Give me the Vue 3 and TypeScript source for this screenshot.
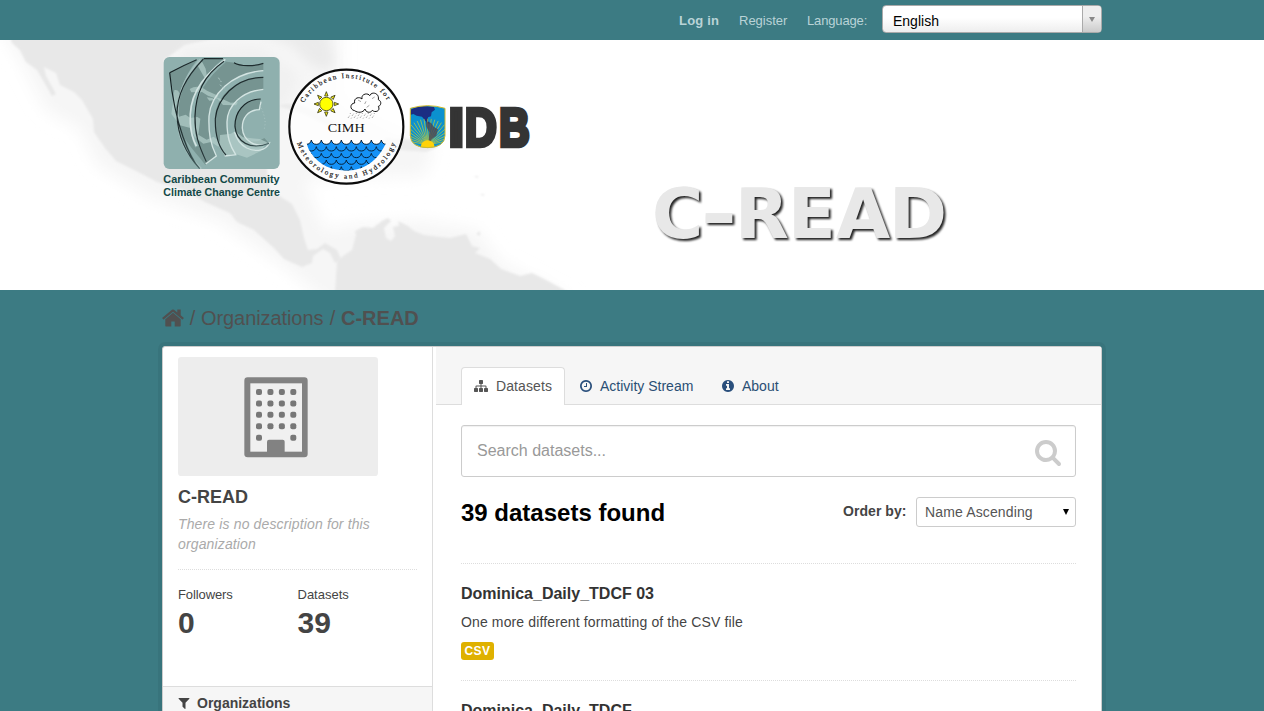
<script setup lang="ts">
const icons = {
  home: 'M1472 992v480q0 26-19 45t-45 19h-384v-384h-256v384h-384q-26 0-45-19t-19-45v-480q0-1 .5-3t.5-3l575-474 575 474q1 2 1 6zm223-69l-62 74q-8 9-21 11h-3q-13 0-21-7l-692-577-692 577q-12 8-24 7-13-2-21-11l-62-74q-8-10-7-23.5t11-21.5l719-599q32-26 76-26t76 26l244 204v-195q0-14 9-23t23-9h192q14 0 23 9t9 23v408l219 182q10 8 11 21.5t-7 23.5z',
  search: 'M1216 832q0-185-131.5-316.5t-316.5-131.5-316.5 131.5-131.5 316.5 131.5 316.5 316.5 131.5 316.5-131.5 131.5-316.5zm512 832q0 52-38 90t-90 38q-54 0-90-38l-343-342q-179 124-399 124-143 0-273.5-55.5t-225-150-150-225-55.5-273.5 55.5-273.5 150-225 225-150 273.5-55.5 273.5 55.5 225 150 150 225 55.5 273.5q0 220-124 399l343 343q37 37 37 90z',
  info: 'M1152 1376v-160q0-14-9-23t-23-9h-96v-512q0-14-9-23t-23-9h-320q-14 0-23 9t-9 23v160q0 14 9 23t23 9h96v320h-96q-14 0-23 9t-9 23v160q0 14 9 23t23 9h448q14 0 23-9t9-23zm-128-896v-160q0-14-9-23t-23-9h-192q-14 0-23 9t-9 23v160q0 14 9 23t23 9h192q14 0 23-9t9-23zm640 416q0 209-103 385.5t-279.5 279.5-385.5 103-385.5-103-279.5-279.5-103-385.5 103-385.5 279.5-279.5 385.5-103 385.5 103 279.5 279.5 103 385.5z',
  clock: 'M1024 544v448q0 14-9 23t-23 9h-320q-14 0-23-9t-9-23v-64q0-14 9-23t23-9h224v-352q0-14 9-23t23-9h64q14 0 23 9t9 23zm416 352q0-148-73-273t-198-198-273-73-273 73-198 198-73 273 73 273 198 198 273 73 273-73 198-198 73-273zm224 0q0 209-103 385.5t-279.5 279.5-385.5 103-385.5-103-279.5-279.5-103-385.5 103-385.5 279.5-279.5 385.5-103 385.5 103 279.5 279.5 103 385.5z',
  filter: 'M1595 295q17 41-14 70l-493 493v742q0 42-39 59-13 5-25 5-27 0-45-19l-256-256q-19-19-19-45v-486l-493-493q-31-29-14-70 17-39 59-39h1280q42 0 59 39z',
  sitemap: 'M1792 1248v320q0 40-28 68t-68 28h-320q-40 0-68-28t-28-68v-320q0-40 28-68t68-28h96v-192h-512v192h96q40 0 68 28t28 68v320q0 40-28 68t-68 28h-320q-40 0-68-28t-28-68v-320q0-40 28-68t68-28h96v-192h-512v192h96q40 0 68 28t28 68v320q0 40-28 68t-68 28h-320q-40 0-68-28t-28-68v-320q0-40 28-68t68-28h96v-192q0-52 38-90t90-38h512v-192h-96q-40 0-68-28t-28-68v-320q0-40 28-68t68-28h320q40 0 68 28t28 68v320q0 40-28 68t-68 28h-96v192h512q52 0 90 38t38 90v192h96q40 0 68 28t28 68z',
}

const tabs = [
  { label: 'Datasets', icon: icons.sitemap, active: true, cls: 'tab-datasets' },
  { label: 'Activity Stream', icon: icons.clock, active: false, cls: 'tab-activity' },
  { label: 'About', icon: icons.info, active: false, cls: 'tab-about' },
]

const datasets = [
  { title: 'Dominica_Daily_TDCF 03', notes: 'One more different formatting of the CSV file', format: 'CSV' },
  { title: 'Dominica_Daily_TDCF', notes: '', format: 'CSV' },
]

// Rows of scalloped waves for the institute seal
const waveRow = (x: number, y: number): string => `M${x} ${y}` + 'q3 13 15 13q12 0 15-13'.repeat(10)
const waves: string[] = [0, 1, 2, 3, 4].map((row) => waveRow(row % 2 ? 37 : 52, 228 + row * 20))
const sea = waveRow(52, 228) + 'V330H52Z'

const rays = Array.from({ length: 8 }, (_, i) => i * 45)
const beams = Array.from({ length: 21 }, (_, i) => -80 + i * 8)
const windows = [0, 1, 2, 3, 4].flatMap((r) =>
  [0, 1, 2, 3].filter((c) => r < 4 || c === 0 || c === 3).map((c) => ({ x: 303 + c * 34.3, y: 282 + r * 34.3 })),
)
const drops = Array.from({ length: 27 }, (_, i) => ({
  x: 200 + (i % 9) * 9 + Math.floor(i / 9) * -3,
  y: 147 + Math.floor(i / 9) * 6 + (i % 2) * 2,
}))
</script>

<template>
  <div class="page">
    <nav class="account">
      <div class="container account-inner">
        <a class="login">Log in</a>
        <a class="register">Register</a>
        <span class="lang-label">Language:</span>
        <div class="lang-select"><span>English</span><i><b></b></i></div>
      </div>
    </nav>

    <header class="banner">
      <svg class="map" width="1264" height="250" viewBox="0 0 1264 250">
        <defs>
          <filter id="haze" x="-20%" y="-20%" width="140%" height="140%"><feGaussianBlur stdDeviation="8" /></filter>
          <filter id="soft"><feGaussianBlur stdDeviation="1" /></filter>
          <filter id="gulf" x="-30%" y="-30%" width="160%" height="160%"><feGaussianBlur stdDeviation="6" /></filter>
        </defs>
        <path d="M-5-20L20 20 45 70 80 90 96 125 150 158 220 182 290 232 330 265 575 260 500 222 478 190 420 180 350 185 325 190 305 140 345 138 425 136 435 105 385 85 340 60 340-20Z" fill="#f6f6f6" filter="url(#haze)" />
        <g fill="#e8e8e8" filter="url(#soft)">
          <path d="M10-5L12 3 20 10 26 22 37 30 44 42 52 56 56 54 51 45 46 36 44 27 56 33 60 45 74 52 82 60 93 79 94 92 105 108 116 121 138 132 157 142 184 150 205 162 230 173 237 182 254 190 274 208 284 219 302 227 312 223 313 216 323 209 330 213 335 223 341 219 337 210 325 203 317 209 308 210 304 198 300 180 292 164 270 150 265 118 230 122 195 120 174 105 165 70 164 20 185 5 230-5Z" />
          <path d="M335 252L337 222 343 216 352 210 356 195 355 191 363 187 373 188 382 181 388 178 391 181 384 188 386 198 391 201 395 196 393 187 399 186 398 181 408 186 414 191 424 195 440 197 450 198 466 194 472 206 480 208 475 213 490 219 501 229 520 236 532 233 548 241 568 252Z" />
          <path d="M476 194l4-3 0 5zM474 136h4v2zM480 154h4v2z" />
        </g>
        <g filter="url(#gulf)">
          <path d="M255-10h72l8 34 -8 7 -16-6 -18-18z" fill="#ebebeb" />
          <path d="M175 35L184 8 260 6 300 35 290 60 210 120 180 95Z" fill="#f1f1f1" />
        </g>
        <path d="M278 66q15-6 34 4l28 15-12 1-24-12zM385 98l30 2 23 7-12 5-26-2-18 3z" fill="#ebebeb" filter="url(#soft)" />
      </svg>

      <div class="logos">
        <svg class="logo-cccc" width="130" height="155" viewBox="0 0 390 465">
          <defs>
            <linearGradient id="fade" x1="0" y1="0" x2="1" y2="1">
              <stop offset="0" stop-color="#111c1e" /><stop offset=".6" stop-color="#263638" /><stop offset="1" stop-color="#4c6a6a" />
            </linearGradient>
          </defs>
          <rect x="26" y="21" width="348" height="336" rx="17" fill="#8fb0ae" />
          <g fill="#769491">
            <path d="M44 67Q85 48 126 30C90 76 68 125 68 195 70 260 103 320 139 356 105 325 75 245 44 67Z" />
            <path d="M143 26H205C150 68 118 130 120 200 120 265 135 300 155 342L183 320 151 345C110 290 66 255 66 190 72 120 110 66 143 26Z" />
            <path d="M205 34L238 38C275 50 305 50 325 40V61C245 68 200 125 162 190 160 250 166 281 184 318L155 342C125 285 118 245 120 195 122 140 145 73 205 34Z" />
            <path d="M325 82V118C265 125 218 167 215 217 214 252 221 285 240 313L209 317C187 285 176 240 181 190 190 133 245 83 325 82Z" />
            <path d="M317 147C265 150 242 188 239 224 238 270 277 300 318 292L342 279 328 264C290 290 262 265 262 228 264 197 286 177 313 176Z" />
          </g>
          <path d="M208 32Q121 105 112 190 108 250 126 290" fill="none" stroke="#8fb0ae" stroke-width="12" />
          <path d="M325 72C235 76 176 135 171 200 170 250 178 285 195 317" fill="none" stroke="#8fb0ae" stroke-width="15" />
          <g fill="#b3cecb" opacity=".7">
            <path d="M129 29l13 8 10 19 4 24-7 4-12-21-10-18zM104 117q26-15 52 5l33 15-4 9-26-9-18-11-32 1zM155 142l17 2 8 6-17 2zM185 143l19 5 23 10 22-1-6 9-39-1zM58 120q18-2 14 20l-10 35 10 25 20-6 14 10 21-3 9 5-6 48 25 15 21-9 25 22-11 8-22-14-23 5-25-19-14-28-31-8-26-34 5-36zM195 255l33-4 12-8 24 19 50 5 22 10-18 26-42 20-37-12-30 7-15-25z" />
          </g>
          <g fill="none" stroke="#d3e4e2">
            <path d="M136 28C80 90 61 150 70 213 68 260 90 310 139 356" stroke="#a5c0be" stroke-width="5" />
            <path d="M211 28C127 90 101 150 106 220 108 252 117 275 124 288" stroke-width="5" />
            <path d="M325 62C228 69 168 135 162 198 160 250 166 281 184 318L152 342" stroke-width="4" />
            <path d="M325 118C260 124 217 167 216 216 216 262 225 287 242 314L209 318" stroke-width="4" />
            <path d="M318 155L313 179C278 180 261 205 262 235 264 270 300 298 343 279 332 303 302 307 275 294 255 283 244 266 239 246" stroke-width="4" />
          </g>
          <g fill="none" stroke="url(#fade)" stroke-width="3.5">
            <path d="M44 68Q85 46 125 29M44 68C60 230 105 325 134 356M145 27C90 85 66 135 66 195 68 255 92 310 134 356" />
            <path d="M146 26H204M207 34C145 78 122 130 120 200 119 250 130 285 154 335" />
            <path d="M237 38C255 50 300 49 325 40M325 82C238 83 187 147 181 206 180 250 190 290 213 315" />
            <path d="M317 147C265 148 239 190 240 230 244 275 285 302 342 280" />
          </g>
          <path d="M315 166l7 15 6 18 3 20-4 24" fill="none" stroke="#a9c4c2" stroke-width="3" stroke-dasharray="3 7" />
          <path d="M190 83l9 13M195 104l17 17" stroke="#adc6c4" stroke-width="3" stroke-dasharray="7 4" />
          <g class="logo-text" fill="#124847" font-size="34">
            <text x="25" y="398" textLength="349" lengthAdjust="spacingAndGlyphs">Caribbean Community</text>
            <text x="25" y="438" textLength="350" lengthAdjust="spacingAndGlyphs">Climate Change Centre</text>
          </g>
        </svg>

        <svg class="logo-cimh" width="124" height="126" viewBox="0 0 372 378">
          <defs>
            <path id="arc-top" d="M41 188a146 146 0 0 1 292 0" />
            <path id="arc-bottom" d="M31 188a156 156 0 0 0 312 0" />
            <clipPath id="sea-bowl"><path d="M64 222C70 250 75 258 82 268 106 304 144 320 188 320 248 320 290 282 312 222Z" /></clipPath>
          </defs>
          <circle cx="187" cy="188" r="171" fill="#fff" fill-opacity=".75" stroke="#0b0b0b" stroke-width="6.5" />
          <g class="serif" font-size="21" fill="#111">
            <text stroke="#111" stroke-width=".5"><textPath href="#arc-top" startOffset="74" textLength="300">Caribbean Institute for</textPath></text>
            <text stroke="#111" stroke-width=".5"><textPath href="#arc-bottom" startOffset="50" textLength="388">Meteorology and Hydrology</textPath></text>
            <text x="131" y="203" font-size="40" textLength="111" lengthAdjust="spacingAndGlyphs">CIMH</text>
          </g>
          <g stroke="#3e3d18" stroke-width="2.5" fill="#f7ef10">
            <path v-for="a in rays" :key="a" d="M122 96l5-13 5 13z" :transform="`rotate(${a} 127 120)`" />
            <circle cx="127" cy="120" r="20" fill="#ff0" />
          </g>
          <path d="M212 140c-16-3-14-22 0-23-4-16 15-20 22-12-3-18 20-18 23-10 6-14 30-8 26 12 13 6 6 20 0 20 8 14-10 20-18 12-6 10-20 6-22-4-6 12-22 12-31 5z" fill="#fff" stroke="#111" stroke-width="3" />
          <path d="M222 108l9 5M246 112l-4 8M264 104l8-5M248 130l8-6" fill="none" stroke="#777" stroke-width="2" />
          <path v-for="(p, i) in drops" :key="i" :d="`M${p.x} ${p.y}l-2 3`" stroke="#888" stroke-width="2" />
          <g clip-path="url(#sea-bowl)">
            <path :d="sea" fill="#1592f7" />
            <path v-for="d in waves" :key="d" :d="d" fill="none" stroke="#07233c" stroke-width="3" />
          </g>
        </svg>

        <svg class="logo-idb" width="134" height="60" viewBox="0 0 402 180">
          <defs><clipPath id="shield"><path d="M19 31Q71 15 123 31V113Q122 148 71 149 20 148 19 113Z" /></clipPath></defs>
          <path d="M19 31Q71 15 123 31V113Q122 148 71 149 20 148 19 113Z" fill="#0b91cf" />
          <g clip-path="url(#shield)">
            <path d="M22 34l14-6 22-4 32 3 3 8-10 8-2 12-9 3-1 10 7 8-6 1-10-11-8-10-16-3-10-5-15 5z" fill="#1b2e83" />
            <path v-for="a in beams" :key="a" d="M71 134V62" :transform="`rotate(${a} 71 140)`" stroke="#c6ca35" stroke-width="2" />
            <path d="M66 72l15 2 8 12 13 8-5 19-14 11-4 10-5-6 2-25-9-17z" fill="#4c4550" opacity=".8" />
            <ellipse cx="71" cy="143" rx="20" ry="16" fill="#ffd20a" />
          </g>
          <path d="M19 31Q71 15 123 31V113Q122 148 71 149 20 148 19 113Z" fill="none" stroke="#d2ba2c" stroke-width="3" />
          <g class="idb-text" fill="#343434" stroke="#343434" stroke-width="14">
            <text x="134" y="143">I</text>
            <text x="183" y="143" textLength="95" lengthAdjust="spacingAndGlyphs">D</text>
            <text x="286" y="143" textLength="91" lengthAdjust="spacingAndGlyphs">B</text>
          </g>
        </svg>
      </div>

      <svg class="wordmark" width="320" height="85" viewBox="0 0 320 85">
        <text y="67.5"><tspan x="12">C</tspan><tspan x="61" textLength="36" lengthAdjust="spacingAndGlyphs">-</tspan><tspan x="95 148 196 249">READ</tspan></text>
      </svg>
    </header>

    <main class="container">
      <div class="crumbs">
        <svg class="home" width="24" height="24" viewBox="0 0 1792 1792"><path :d="icons.home" /></svg>
        <span class="sep">/</span><a class="crumb-org">Organizations</a><span class="sep">/</span><strong>C-READ</strong>
      </div>

      <div class="wrapper">
        <aside>
          <div class="org">
            <svg class="org-image" width="200" height="119" viewBox="69 186 600 357">
              <rect x="69" y="186" width="600" height="357" rx="10" fill="#ededed" />
              <rect x="268" y="247" width="190" height="240" rx="10" fill="#828282" />
              <rect x="286" y="265" width="155" height="205" fill="#f0f0f0" />
              <rect v-for="(w, i) in windows" :key="i" :x="w.x" :y="w.y" width="18" height="18" rx="6" fill="#777" />
              <path d="M336 474v-34q0-6 6-6h41q6 0 6 6v34z" fill="#828282" />
            </svg>
            <h1>C-READ</h1>
            <p class="empty">There is no description for this organization</p>
            <div class="nums">
              <dl><dt class="followers">Followers</dt><dd>0</dd></dl>
              <dl><dt>Datasets</dt><dd>39</dd></dl>
            </div>
          </div>
          <h2 class="facet"><svg width="14" height="14" viewBox="0 0 1792 1792"><path :d="icons.filter" /></svg><span>Organizations</span></h2>
        </aside>

        <section class="primary">
          <div class="tabs">
            <a v-for="t in tabs" :key="t.label" :class="['tab', t.cls, { active: t.active }]">
              <svg width="14" height="14" viewBox="0 0 1792 1792"><path :d="t.icon" /></svg><span>{{ t.label }}</span>
            </a>
          </div>
          <div class="content">
            <div class="search">
              <span>Search datasets...</span>
              <svg width="28" height="28" viewBox="0 0 1792 1792"><path :d="icons.search" /></svg>
            </div>
            <div class="results">
              <h2>39 datasets found</h2>
              <div class="order"><label>Order by:</label><div class="order-select"><span>Name Ascending</span><b></b></div></div>
            </div>
            <article v-for="d in datasets" :key="d.title">
              <h3>{{ d.title }}</h3>
              <p>{{ d.notes }}</p>
              <span class="badge">{{ d.format }}</span>
            </article>
          </div>
        </section>
      </div>
    </main>
  </div>
</template>

<style>
html, body { overflow: hidden; background: #3c7b83; }
</style>

<style scoped>
* { box-sizing: border-box; }
h1, h2, h3, p, dl, dd { margin: 0; }
svg { display: block; flex: none; }
.page {
  height: 711px;
  overflow: hidden;
  background: #3c7b83;
  color: #444;
  font: 14px/20px "Liberation Sans", Arial, sans-serif;
}
.container { width: 940px; margin-left: 162px; }
.account { height: 40px; }
.account-inner { display: flex; height: 40px; color: #b9d3d7; font-size: 13px; justify-content: flex-end; white-space: nowrap; }
.account-inner > a, .lang-label { padding-top: 11px; }
.login { font-weight: bold; width: 60px; letter-spacing: .2px; }
.register { width: 68px; }
.lang-label { width: 75px; letter-spacing: -.15px; }
.lang-select {
  display: flex; justify-content: space-between; width: 220px; height: 28px; margin-top: 5px;
  border: 1px solid #aaa; border-radius: 4px; overflow: hidden;
  background: linear-gradient(#fff 45%, #eee); color: #000; font-size: 14px; line-height: 31px;
}
.lang-select span { padding-left: 10px; }
.lang-select i { display: flex; align-items: center; justify-content: center; width: 19px; border-left: 1px solid #aaa; background: linear-gradient(#eee 40%, #ccc); }
.lang-select b { border: 3px solid transparent; border-top: 5px solid #888; border-bottom: 0; }

.banner { position: relative; height: 250px; background: #fff; overflow: hidden; }
.map { position: absolute; inset: 0; }
.logos { position: relative; display: flex; align-items: flex-start; padding: 10px 0 0 155px; }
.logo-cimh { margin: 14px 0 0 -1px; }
.logo-idb { margin: 48px 0 0 -4px; }
.logo-text { font-family: "Liberation Sans", Arial, sans-serif; font-weight: bold; }
.serif { font-family: "Liberation Serif", serif; }
.idb-text { font: bold 163px "Liberation Sans", Arial, sans-serif; }
.wordmark { position: absolute; left: 640px; top: 130px; overflow: visible; }
.wordmark text { font: bold 70px "DejaVu Sans", Verdana, sans-serif; fill: #e8e8e8; filter: drop-shadow(2px 2px 1px #222); }

.crumbs { display: flex; align-items: center; height: 56px; color: #505050; font-size: 20px; }
.home { margin: -1px -1px 0 -1px; fill: #505050; }
.sep { width: 17px; text-align: center; }
.crumb-org { width: 123px; letter-spacing: -.08px; }
.wrapper {
  display: flex; height: 500px; background: #fff; border: 1px solid #ccc; border-radius: 3px;
  box-shadow: 0 0 0 4px rgba(0, 0, 0, .05);
}
aside { width: 270px; border-right: 1px solid #ddd; }
.org { height: 339px; padding: 10px 15px 0; }
h1 { margin-top: 11px; font-size: 18px; line-height: 20px; }
.empty { margin-top: 7px; color: #aaa; font-style: italic; width: 205px; letter-spacing: .14px; }
.nums { display: flex; margin-top: 15px; padding-top: 15px; border-top: 1px dotted #ddd; }
dl { width: 120px; }
dt { font-size: 13px; line-height: 20px; }
.followers { letter-spacing: -.1px; }
dd { font-size: 30px; font-weight: bold; line-height: 35px; }
.facet { display: flex; align-items: center; gap: 6px; height: 33px; padding-left: 14px; border-top: 1px solid #ddd; background: #f6f6f6; font-size: 14px; }
.facet svg { fill: #444; }
.primary { width: 665px; margin-left: 3px; }
.tabs { display: flex; align-items: flex-end; height: 58px; padding-left: 25px; background: #f6f6f6; border-bottom: 1px solid #ddd; }
.tab { display: flex; align-items: center; gap: 7px; height: 37px; color: #2a4f74; fill: #2a4f7c; white-space: nowrap; }
.tab.active { gap: 8px; height: 38px; margin-bottom: -1px; padding-bottom: 2px; background: #fff; border: 1px solid #ddd; border-bottom: 0; border-radius: 4px 4px 0 0; color: #555; fill: #555; }
.tab-datasets { width: 104px; padding-left: 12px; letter-spacing: .1px; }
.tab-activity { width: 142px; padding-left: 14px; }
.tab-about { padding-left: 14px; }
.content { padding: 20px 25px 0; }
.search { display: flex; align-items: center; justify-content: space-between; height: 52px; padding: 0 13px 1px 15px; border: 1px solid #ccc; border-radius: 3px; box-shadow: inset 0 1px 1px rgba(0,0,0,.06); color: #999; font-size: 16px; }
.search svg { margin-top: 2px; fill: #ccc; }
.results { display: flex; justify-content: space-between; height: 66px; margin-top: 20px; }
.results h2 { color: #000; font-size: 24px; line-height: 32px; }
.order { display: flex; color: #444; }
.order label { width: 73px; font-weight: bold; line-height: 28px; letter-spacing: .05px; }
.order-select { display: flex; align-items: center; justify-content: space-between; width: 160px; height: 30px; padding: 0 6px 0 8px; border: 1px solid #ccc; border-radius: 3px; color: #555; letter-spacing: .14px; }
.order-select b { border: 3px solid transparent; border-top: 6px solid #000; border-bottom: 0; }
article { height: 117px; padding-top: 19px; border-top: 1px dotted #ddd; }
h3 { color: #333; font-size: 16px; line-height: 21px; }
article p { min-height: 20px; margin-top: 8px; letter-spacing: .13px; }
.badge { display: block; width: 33px; height: 18px; margin-top: 10px; border-radius: 3px; background: #dfb100; color: #fff; font-size: 12px; font-weight: bold; line-height: 18px; text-align: center; letter-spacing: .5px; }
</style>
